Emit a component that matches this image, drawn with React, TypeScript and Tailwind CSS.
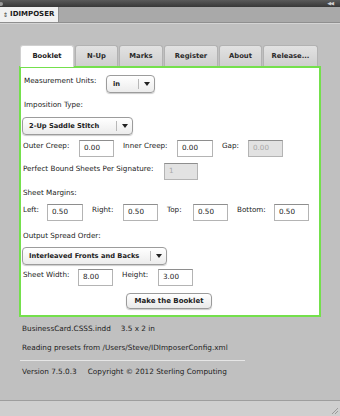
import React from "react";

const font = { fontFamily: '"DejaVu Sans", "Lucida Grande", sans-serif' };

function Field({ value, w, disabled }: { value: string; w: string; disabled?: boolean }) {
  return (
    <div
      className={`${w} h-[17px] flex items-center pl-[4px] border border-[#b4b4b4] border-t-[#8e8e8e] text-[7.2px] ${
        disabled ? "bg-[#e2e2e2] text-[#a8a8a8]" : "bg-white text-[#222]"
      }`}
    >
      {value}
    </div>
  );
}

function Select({ label, w }: { label: string; w: string }) {
  return (
    <div
      className={`${w} h-[18px] flex items-stretch rounded-[4px] border border-[#9c9c9c] bg-gradient-to-b from-white to-[#ececec] shadow-[0_1px_1px_rgba(0,0,0,0.2)]`}
    >
      <div className="flex-1 flex items-center pl-[6px] text-[6.7px] font-bold text-[#222]">{label}</div>
      <div className="w-[16px] flex items-center justify-center border-l border-[#b8b8b8] my-[3px]">
        <svg width="6" height="4" viewBox="0 0 6 4">
          <path d="M0 0H6L3 4Z" fill="#222" />
        </svg>
      </div>
    </div>
  );
}

function Label({ children, w, ml }: { children: React.ReactNode; w: string; ml?: string }) {
  return <span className={`${w} ${ml ?? ""} text-[7.2px] text-[#222] leading-[10px] self-start mt-[1px] whitespace-nowrap`}>{children}</span>;
}

const tabs = [
  { name: "N-Up", w: "w-[43px]" },
  { name: "Marks", w: "w-[44px]" },
  { name: "Register", w: "w-[54px]" },
  { name: "About", w: "w-[43px]" },
  { name: "Release...", w: "w-[55px]" },
];

export default function App() {
  return (
    <div className="w-[340px] h-[416px] bg-[#c0c0c0] flex flex-col overflow-hidden" style={font}>
      {/* window title bar */}
      <div className="h-[7px] bg-gradient-to-b from-[#5a5a5a] to-[#383838] flex items-center justify-between px-[1px]">
        <div className="w-[4px] h-[4px] rounded-full bg-[#9a9a9a] -ml-[2px]" />
        <span className="text-[5px] leading-none text-[#cfcfcf] mr-[6px] tracking-[-1px]">◀◀</span>
      </div>
      {/* panel tab strip */}
      <div className="h-[16px] bg-[#a9a9a9] flex border-b border-[#8f8f8f]">
        <div className="w-[59px] bg-[#f1f1f1] border-r border-[#8f8f8f] flex items-center pl-[3px] gap-[2px]">
          <span className="text-[6px] text-[#333] leading-none">⇕</span>
          <span className="text-[7px] font-bold text-[#1a1a1a]">IDIMPOSER</span>
        </div>
      </div>
      <div className="h-[1px] bg-[#d4d4d4]" />

      <div className="pl-[19px] pt-[20px]">
        {/* tabs */}
        <div className="flex items-end h-[22px] pl-[1px] gap-[1px]">
          <div className="w-[54px] h-[22px] bg-white rounded-t-[3px] border border-b-0 border-[#d0d0d0] flex items-center justify-center text-[6.8px] font-bold text-[#222] -mb-[1px] relative z-10">
            Booklet
          </div>
          {tabs.map((t) => (
            <div
              key={t.name}
              className={`${t.w} h-[21px] rounded-t-[3px] border border-b-0 border-[#b2b2b2] bg-gradient-to-b from-[#e2e2e2] to-[#cfcfcf] flex items-center justify-center text-[6.8px] font-bold text-[#2a2a2a]`}
            >
              {t.name}
            </div>
          ))}
        </div>

        {/* green panel */}
        <div className="w-[302px] h-[251px] border-2 border-[#74e04c] bg-white flex flex-col pl-[1px]">
          <div className="flex items-start mt-[7px] h-[18px]">
            <Label w="w-[82px]" ml="ml-[2px]">Measurement Units:</Label>
            <Select label="in" w="w-[49px]" />
          </div>

          <div className="mt-[6px] h-[10px] flex">
            <Label w="w-auto" ml="ml-[2px]">Imposition Type:</Label>
          </div>

          <div className="mt-[8px] flex">
            <Select label="2-Up Saddle Stitch" w="w-[111px]" />
          </div>

          <div className="mt-[5px] flex items-start h-[17px]">
            <Label w="w-[56px]" ml="ml-[1px]">Outer Creep:</Label>
            <Field value="0.00" w="w-[35px]" />
            <Label w="w-[54px]" ml="ml-[9px]">Inner Creep:</Label>
            <Field value="0.00" w="w-[36px]" />
            <Label w="w-[26px]" ml="ml-[9px]">Gap:</Label>
            <Field value="0.00" w="w-[35px]" disabled />
          </div>

          <div className="mt-[6px] flex items-start h-[17px]">
            <Label w="w-[141px]" ml="ml-[1px]">Perfect Bound Sheets Per Signature:</Label>
            <Field value="1" w="w-[34px]" disabled />
          </div>

          <div className="mt-[7px] h-[10px] flex">
            <Label w="w-auto" ml="ml-[1px]">Sheet Margins:</Label>
          </div>

          <div className="mt-[7px] flex items-start h-[17px]">
            <Label w="w-[24px]" ml="ml-[1px]">Left:</Label>
            <Field value="0.50" w="w-[36px]" />
            <Label w="w-[31px]" ml="ml-[9px]">Right:</Label>
            <Field value="0.50" w="w-[35px]" />
            <Label w="w-[26px]" ml="ml-[9px]">Top:</Label>
            <Field value="0.50" w="w-[35px]" />
            <Label w="w-[37px]" ml="ml-[9px]">Bottom:</Label>
            <Field value="0.50" w="w-[35px]" />
          </div>

          <div className="mt-[9px] h-[10px] flex">
            <Label w="w-auto" ml="ml-[1px]">Output Spread Order:</Label>
          </div>

          <div className="mt-[7px] flex">
            <Select label="Interleaved Fronts and Backs" w="w-[145px]" />
          </div>

          <div className="mt-[4px] flex items-start h-[17px]">
            <Label w="w-[55px]" ml="ml-[1px]">Sheet Width:</Label>
            <Field value="8.00" w="w-[35px]" />
            <Label w="w-[36px]" ml="ml-[9px]">Height:</Label>
            <Field value="3.00" w="w-[35px]" />
          </div>

          <div className="mt-[7px] flex justify-center pr-[3px]">
            <button className="w-[86px] h-[16px] rounded-[4px] border border-[#9a9a9a] bg-gradient-to-b from-white to-[#e9e9e9] shadow-[0_1px_1px_rgba(0,0,0,0.2)] text-[7px] font-bold text-[#222] flex items-center justify-center">
              Make the Booklet
            </button>
          </div>
        </div>

        {/* status lines */}
        <div className="pl-[3px] mt-[7px] text-[7.3px] text-[#222] leading-[10px] whitespace-nowrap">
          <div>
            BusinessCard.CSSS.indd<span className="ml-[10px]">3.5 x 2 in</span>
          </div>
          <div className="mt-[9px]">Reading presets from /Users/Steve/IDImposerConfig.xml</div>
        </div>
        <div className="mt-[7px] ml-[1px] w-[225px] h-[1px] bg-[#e6e6e6]" />
        <div className="pl-[3px] mt-[6px] text-[7.3px] text-[#222] leading-[10px] whitespace-nowrap">
          Version 7.5.0.3<span className="ml-[11px]">Copyright © 2012 Sterling Computing</span>
        </div>
      </div>

      <div className="flex-1" />
      <div className="h-[1px] bg-[#9e9e9e]" />
      <div className="h-[15px] bg-[#cfcfcf] flex justify-end items-end pr-[1px] pb-[1px]">
        <svg width="9" height="9" viewBox="0 0 9 9">
          <path d="M8 2L2 8M8 5L5 8" stroke="#9a9a9a" strokeWidth="1" />
        </svg>
      </div>
    </div>
  );
}
